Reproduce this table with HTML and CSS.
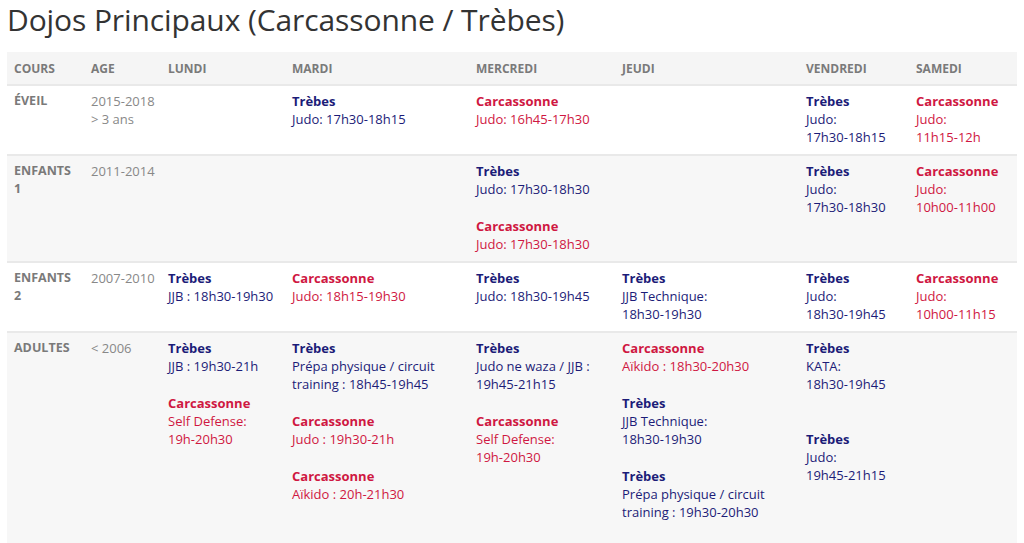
FILE: index.html
```html
<!DOCTYPE html>
<html lang="fr">
<head>
<meta charset="utf-8">
<title>Dojos Principaux</title>
<link rel="stylesheet" href="styles.css">
</head>
<body>
<h2 class="title">Dojos Principaux (Carcassonne / Trèbes)</h2>
<table class="planning">
  <colgroup>
    <col class="c-cours"><col class="c-age"><col class="c-lundi"><col class="c-mardi"><col class="c-mercredi"><col class="c-jeudi"><col class="c-vendredi"><col class="c-samedi">
  </colgroup>
  <thead>
    <tr><th>Cours</th><th>Age</th><th>Lundi</th><th>Mardi</th><th>Mercredi</th><th>Jeudi</th><th>Vendredi</th><th>Samedi</th></tr>
  </thead>
  <tbody>
    <tr>
      <td class="cours">Éveil</td>
      <td class="age"><span class="nw">2015-2018</span><br>&gt; 3 ans</td>
      <td></td>
      <td><span class="tr">Trèbes</span><span class="tr-t">Judo: <span class="nw">17h30-18h15</span></span></td>
      <td><span class="ca">Carcassonne</span><span class="ca-t">Judo: <span class="nw">16h45-17h30</span></span></td>
      <td></td>
      <td><span class="tr">Trèbes</span><span class="tr-t">Judo:<br><span class="nw">17h30-18h15</span></span></td>
      <td><span class="ca">Carcassonne</span><span class="ca-t">Judo:<br><span class="nw">11h15-12h</span></span></td>
    </tr>
    <tr class="alt">
      <td class="cours">Enfants 1</td>
      <td class="age"><span class="nw">2011-2014</span></td>
      <td></td>
      <td></td>
      <td><span class="tr">Trèbes</span><span class="tr-t">Judo: <span class="nw">17h30-18h30</span></span><span class="gap"></span><span class="ca">Carcassonne</span><span class="ca-t">Judo: <span class="nw">17h30-18h30</span></span></td>
      <td></td>
      <td><span class="tr">Trèbes</span><span class="tr-t">Judo:<br><span class="nw">17h30-18h30</span></span></td>
      <td><span class="ca">Carcassonne</span><span class="ca-t">Judo:<br><span class="nw">10h00-11h00</span></span></td>
    </tr>
    <tr>
      <td class="cours">Enfants 2</td>
      <td class="age"><span class="nw">2007-2010</span></td>
      <td><span class="tr">Trèbes</span><span class="tr-t">JJB : <span class="nw">18h30-19h30</span></span></td>
      <td><span class="ca">Carcassonne</span><span class="ca-t">Judo: <span class="nw">18h15-19h30</span></span></td>
      <td><span class="tr">Trèbes</span><span class="tr-t">Judo: <span class="nw">18h30-19h45</span></span></td>
      <td><span class="tr">Trèbes</span><span class="tr-t">JJB Technique:<br><span class="nw">18h30-19h30</span></span></td>
      <td><span class="tr">Trèbes</span><span class="tr-t">Judo:<br><span class="nw">18h30-19h45</span></span></td>
      <td><span class="ca">Carcassonne</span><span class="ca-t">Judo:<br><span class="nw">10h00-11h15</span></span></td>
    </tr>
    <tr class="alt">
      <td class="cours">Adultes</td>
      <td class="age">&lt; 2006</td>
      <td><span class="tr">Trèbes</span><span class="tr-t">JJB : <span class="nw">19h30-21h</span></span><span class="gap"></span><span class="ca">Carcassonne</span><span class="ca-t">Self Defense:<br><span class="nw">19h-20h30</span></span></td>
      <td><span class="tr">Trèbes</span><span class="tr-t">Prépa physique / circuit<br>training : <span class="nw">18h45-19h45</span></span><span class="gap"></span><span class="ca">Carcassonne</span><span class="ca-t">Judo : <span class="nw">19h30-21h</span></span><span class="gap"></span><span class="ca">Carcassonne</span><span class="ca-t">Aïkido : <span class="nw">20h-21h30</span></span></td>
      <td><span class="tr">Trèbes</span><span class="tr-t">Judo ne waza / JJB :<br><span class="nw">19h45-21h15</span></span><span class="gap"></span><span class="ca">Carcassonne</span><span class="ca-t">Self Defense:<br><span class="nw">19h-20h30</span></span></td>
      <td><span class="ca">Carcassonne</span><span class="ca-t">Aïkido : <span class="nw">18h30-20h30</span></span><span class="gap"></span><span class="tr">Trèbes</span><span class="tr-t">JJB Technique:<br><span class="nw">18h30-19h30</span></span><span class="gap"></span><span class="tr">Trèbes</span><span class="tr-t">Prépa physique / circuit<br>training : <span class="nw">19h30-20h30</span></span><span class="gap"></span></td>
      <td><span class="tr">Trèbes</span><span class="tr-t">KATA:<br><span class="nw">18h30-19h45</span></span><span class="gap gap-double"></span><span class="tr">Trèbes</span><span class="tr-t">Judo:<br><span class="nw">19h45-21h15</span></span></td>
      <td></td>
    </tr>
  </tbody>
</table>
</body>
</html>
```

FILE: styles.css
```css
html, body {
  margin: 0;
  padding: 0;
  background: #ffffff;
}
body {
  padding: 0 7px;
  font-family: "Open Sans", "Liberation Sans", sans-serif;
  font-size: 13px;
  line-height: 18px;
  color: #777777;
}
.title {
  margin: 2px 0 14px 0;
  font-family: "Open Sans", "Liberation Sans", sans-serif;
  font-weight: 500;
  font-size: 30px;
  line-height: 36px;
  color: #333333;
  letter-spacing: -0.1px;
}
.planning {
  width: 1010px;
  border-collapse: collapse;
  table-layout: fixed;
}
.c-cours { width: 77px; }
.c-age { width: 77px; }
.c-lundi { width: 124px; }
.c-mardi { width: 184px; }
.c-mercredi { width: 146px; }
.c-jeudi { width: 184px; }
.c-vendredi { width: 110px; }
.c-samedi { width: 108px; }
.planning th {
  background: #f5f5f5;
  text-align: left;
  vertical-align: middle;
  font-size: 12px;
  font-weight: 700;
  text-transform: uppercase;
  color: #7a7a7a;
  padding: 8px 7px 6px 7px;
  border-bottom: 2px solid #e9e9e9;
}
.planning td {
  vertical-align: top;
  padding: 6px 7px 8px 7px;
  border-bottom: 2px solid #e9e9e9;
}
.planning tr.alt td {
  background: #f7f7f7;
}
.cours {
  font-size: 12.5px;
  font-weight: 700;
  text-transform: uppercase;
  color: #7a7a7a;
}
.age {
  color: #888888;
}
.nw {
  white-space: nowrap;
}
.tr, .tr-t, .ca, .ca-t, .gap {
  display: block;
}
.gap {
  height: 19px;
}
.gap-double {
  height: 37px;
}
.tr {
  font-weight: 700;
  color: #1c1c78;
}
.tr-t {
  color: #1c1c78;
}
.ca {
  font-weight: 700;
  color: #cf1742;
}
.ca-t {
  color: #cf1742;
}
```
